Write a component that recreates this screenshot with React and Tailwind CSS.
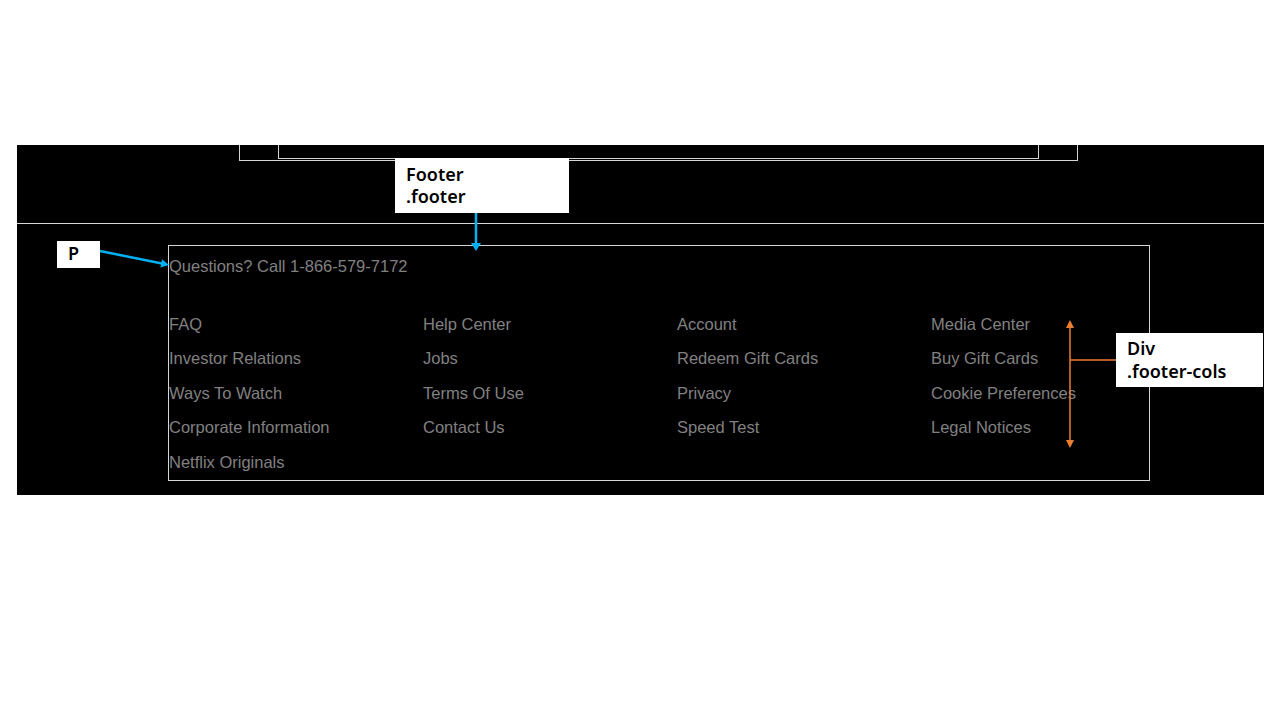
import React from 'react';

const columns = [
  ['FAQ', 'Investor Relations', 'Ways To Watch', 'Corporate Information', 'Netflix Originals'],
  ['Help Center', 'Jobs', 'Terms Of Use', 'Contact Us'],
  ['Account', 'Redeem Gift Cards', 'Privacy', 'Speed Test'],
  ['Media Center', 'Buy Gift Cards', 'Cookie Preferences', 'Legal Notices'],
];

function Annotations() {
  return (
    <>
      <svg className="absolute left-0 top-0 pointer-events-none" width="1280" height="720">
        {/* footer label arrow */}
        <line x1="476" y1="213" x2="476" y2="244" stroke="#00b0f0" strokeWidth="2.5" />
        <polygon points="471,243 481,243 476,251" fill="#00b0f0" />
        {/* p label arrow */}
        <line x1="100" y1="251" x2="162" y2="263.5" stroke="#00b0f0" strokeWidth="2.5" />
        <polygon points="169,265 160.4,267.6 162,259.3" fill="#00b0f0" />
        {/* footer-cols bracket */}
        <line x1="1070" y1="326" x2="1070" y2="442" stroke="#ed7d31" strokeWidth="1.5" />
        <polygon points="1070,320 1066,328 1074,328" fill="#ed7d31" />
        <polygon points="1070,448 1066,440 1074,440" fill="#ed7d31" />
        <line x1="1070" y1="360" x2="1116" y2="360" stroke="#ed7d31" strokeWidth="1.5" />
      </svg>

      <div className="absolute left-[395px] top-[158px] w-[174px] h-[55px] bg-white pl-[11px] pt-[5px] font-['Noto_Sans',sans-serif] font-semibold text-[18px] leading-[22px] text-black">
        <div>Footer</div>
        <div>.footer</div>
      </div>

      <div className="absolute left-[57px] top-[241px] w-[43px] h-[27px] bg-white pl-[11px] font-['Noto_Sans',sans-serif] font-semibold text-[18px] leading-[24px] text-black">
        P
      </div>

      <div className="absolute left-[1116px] top-[333px] w-[147px] h-[54px] bg-white pl-[11px] pt-[4px] font-['Noto_Sans',sans-serif] font-semibold text-[18px] leading-[23px] text-black">
        <div>Div</div>
        <div>.footer-cols</div>
      </div>
    </>
  );
}

export default function App() {
  return (
    <div className="relative w-[1280px] h-[720px] bg-white overflow-hidden font-['Liberation_Sans',Arial,sans-serif]">
      <div className="pt-[145px] pl-[17px]">
        <div className="w-[1247px] h-[350px] bg-black flex flex-col">
          {/* form boxes cut off above */}
          <div className="ml-[222px] w-[839px] h-[16px] border-x border-b border-[#d6d6d6]">
            <div className="mx-[38px] h-[14px] border-x border-b border-[#d6d6d6]" />
          </div>

          <div className="mt-[62px] h-px bg-[#d6d6d6]" />

          <footer className="mt-[21px] ml-[151px] w-[982px] h-[236px] border border-[#d6d6d6]">
            <p className="mt-[10px] text-[16.5px] leading-[20px] text-[#808080]">
              Questions? Call 1-866-579-7172
            </p>

            <div className="mt-[31px] grid grid-cols-[repeat(4,254px)]">
              {columns.map((col, i) => (
                <div key={i} className="flex flex-col">
                  {col.map((link) => (
                    <a
                      key={link}
                      href="#"
                      className="h-[34.5px] flex items-center text-[16.5px] text-[#808080] whitespace-nowrap"
                    >
                      {link}
                    </a>
                  ))}
                </div>
              ))}
            </div>
          </footer>
        </div>
      </div>

      <Annotations />
    </div>
  );
}
